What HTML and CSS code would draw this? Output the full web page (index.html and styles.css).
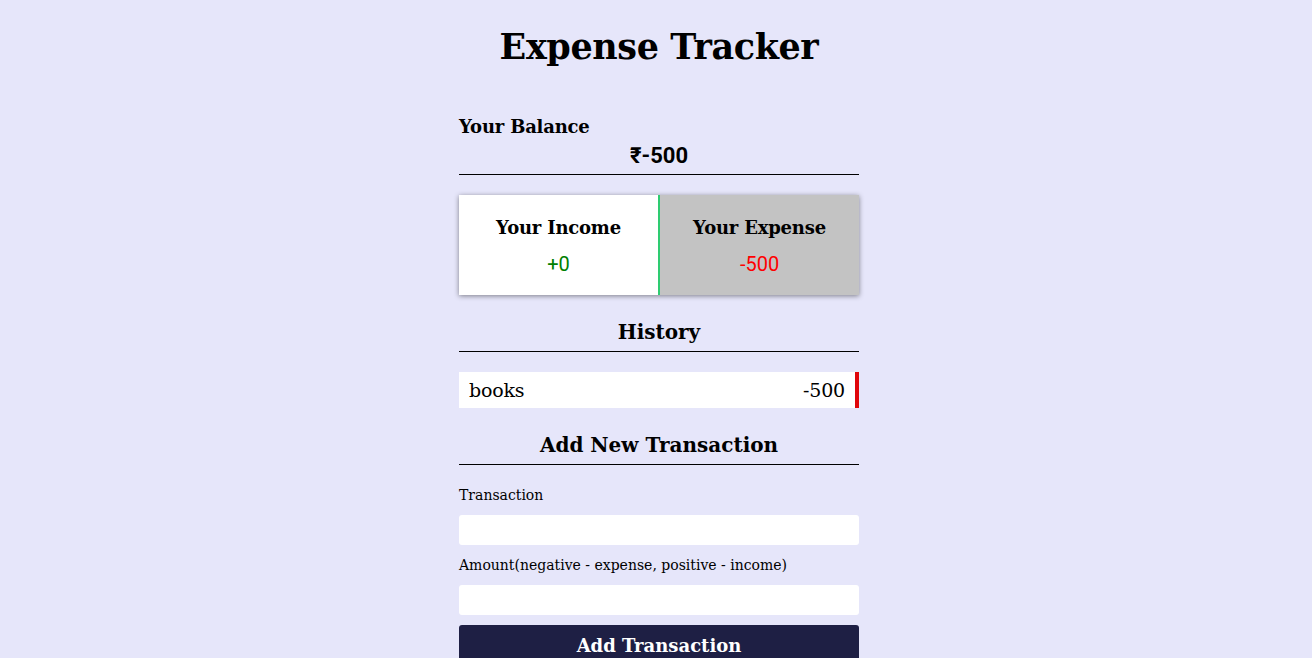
FILE: index.html
```html
<!DOCTYPE html>
<html lang="en">
<head>
<meta charset="utf-8">
<title>Expense Tracker</title>
<link rel="stylesheet" href="styles.css">
</head>
<body>
  <h2 class="title">Expense Tracker</h2>
  <div class="container">
    <h4 class="balance-label">Your Balance</h4>
    <h1 class="balance">₹-500</h1>
    <div class="cards">
      <div class="card income">
        <h4>Your Income</h4>
        <p class="money plus">+0</p>
      </div>
      <div class="card expense">
        <h4>Your Expense</h4>
        <p class="money minus">-500</p>
      </div>
    </div>
    <h3 class="section history">History</h3>
    <ul class="list">
      <li class="item minus-item"><span>books</span><span>-500</span></li>
    </ul>
    <h3 class="section">Add New Transaction</h3>
    <form class="form">
      <label class="label">Transaction</label>
      <input class="input" type="text">
      <label class="label">Amount(negative - expense, positive - income)</label>
      <input class="input" type="text">
      <button class="btn" type="button">Add Transaction</button>
    </form>
  </div>
</body>
</html>
```
FILE: styles.css
```css
* { box-sizing: border-box; }
body {
  margin: 0;
  padding-left: 6px;
  background: #e6e6fa;
  font-family: "DejaVu Serif", serif;
  color: #000;
  display: flex;
  flex-direction: column;
  align-items: center;
}
.title {
  margin: 24px 0 0;
  font-size: 35px;
  font-weight: bold;
  line-height: 46px;
  letter-spacing: -0.4px;
}
.container {
  width: 400px;
  margin-top: 45px;
  display: flex;
  flex-direction: column;
}
.balance-label {
  margin: 0;
  font-size: 18px;
  font-weight: 600;
  line-height: 24px;
  letter-spacing: -0.2px;
}
.balance {
  margin: 0;
  text-align: center;
  font-family: Roboto, "Noto Sans", sans-serif;
  font-size: 22px;
  font-weight: bold;
  line-height: 33px;
  border-bottom: 1px solid #000;
  padding-bottom: 2px;
}
.cards {
  margin-top: 20px;
  display: flex;
  height: 100px;
  box-shadow: 0 1px 5px rgba(0,0,0,0.45);
}
.card {
  flex: 1;
  display: flex;
  flex-direction: column;
  align-items: center;
  padding-top: 20px;
}
.card h4 {
  margin: 0;
  font-size: 18px;
  font-weight: 600;
  line-height: 26px;
  letter-spacing: -0.2px;
}
.income { background: #fff; border-right: 2px solid #2ecc71; }
.expense { background: #c3c3c3; }
.money {
  margin: 9px 0 0;
  font-family: Roboto, "Noto Sans", sans-serif;
  font-size: 20px;
  line-height: 28px;
}
.plus { color: #008000; }
.minus { color: #ff0000; }
.section {
  margin: 16px 0 0;
  text-align: center;
  font-size: 20px;
  font-weight: 600;
  line-height: 38px;
  letter-spacing: 0;
  border-bottom: 1px solid #000;
}
.history { margin-top: 18px; }
.list {
  list-style: none;
  margin: 20px 0 2px;
  padding: 0;
}
.item {
  display: flex;
  justify-content: space-between;
  align-items: center;
  height: 36px;
  background: #fff;
  padding: 0 10px;
  font-size: 19px;
  font-weight: 300;
  letter-spacing: -0.2px;
}
.minus-item { border-right: 4px solid #e0060b; }
.form {
  display: flex;
  flex-direction: column;
  margin-top: 19px;
}
.label {
  font-size: 14px;
  line-height: 22px;
  letter-spacing: 0;
}
.input {
  margin: 9px 0 9px;
  height: 30px;
  border: none;
  border-radius: 3px;
  background: #fff;
  outline: none;
}
.btn {
  margin-top: 1px;
  height: 40px;
  border: none;
  border-radius: 3px;
  background: #1e1f44;
  color: #fff;
  font-family: "DejaVu Serif", serif;
  font-size: 18px;
  font-weight: bold;
  letter-spacing: 0;
  padding: 0;
}
```
